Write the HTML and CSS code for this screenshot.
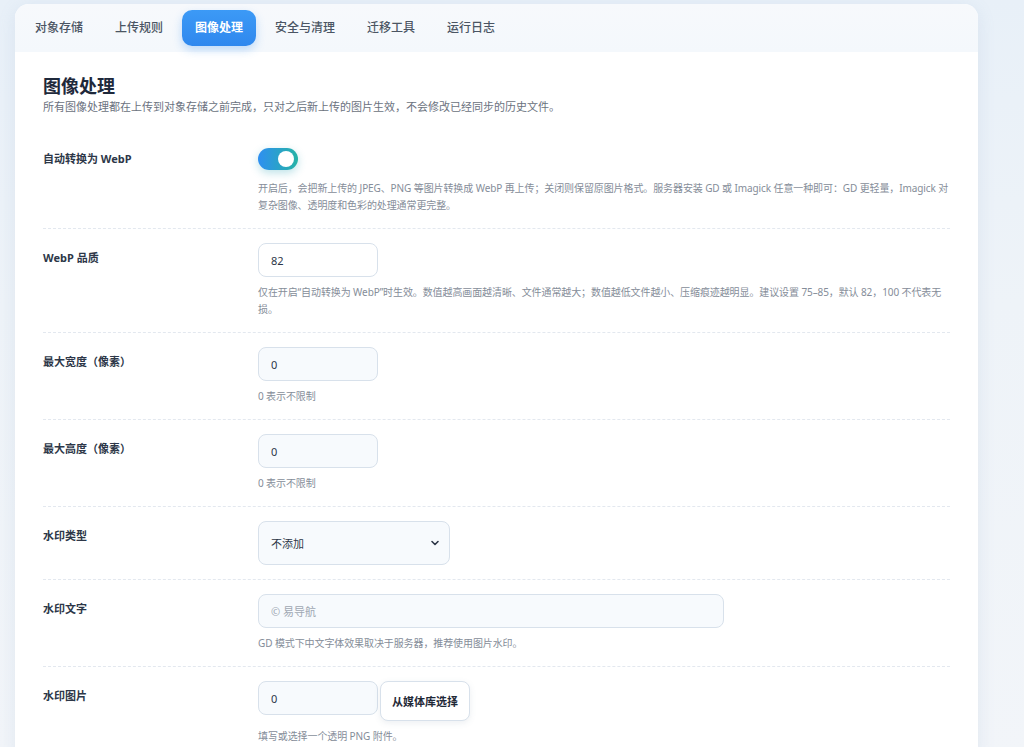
FILE: index.html
```html
<!DOCTYPE html>
<html lang="zh-CN">
<head>
    <meta charset="UTF-8">
    <meta name="viewport" content="width=device-width, initial-scale=1.0">
    <title>图像处理</title>
    <link rel="stylesheet" href="styles.css">
</head>
<body>
    <div class="panel">
        <nav class="tabs">
            <a class="tab">对象存储</a>
            <a class="tab">上传规则</a>
            <a class="tab active">图像处理</a>
            <a class="tab">安全与清理</a>
            <a class="tab">迁移工具</a>
            <a class="tab">运行日志</a>
        </nav>

        <section class="content">
            <h1>图像处理</h1>
            <p class="lead">所有图像处理都在上传到对象存储之前完成，只对之后新上传的图片生效，不会修改已经同步的历史文件。</p>

            <div class="row">
                <label class="label">自动转换为 WebP</label>
                <div class="field">
                    <span class="switch on"><span class="knob"></span></span>
                    <p class="hint">开启后，会把新上传的 JPEG、PNG 等图片转换成 WebP 再上传；关闭则保留原图片格式。服务器安装 GD 或 Imagick 任意一种即可：GD 更轻量，Imagick 对复杂图像、透明度和色彩的处理通常更完整。</p>
                </div>
            </div>

            <div class="row">
                <label class="label">WebP 品质</label>
                <div class="field">
                    <input class="input small white" type="text" value="82">
                    <p class="hint">仅在开启“自动转换为 WebP”时生效。数值越高画面越清晰、文件通常越大；数值越低文件越小、压缩痕迹越明显。建议设置 75–85，默认 82，100 不代表无损。</p>
                </div>
            </div>

            <div class="row">
                <label class="label">最大宽度（像素）</label>
                <div class="field">
                    <input class="input small" type="text" value="0">
                    <p class="hint">0 表示不限制</p>
                </div>
            </div>

            <div class="row">
                <label class="label">最大高度（像素）</label>
                <div class="field">
                    <input class="input small" type="text" value="0">
                    <p class="hint">0 表示不限制</p>
                </div>
            </div>

            <div class="row">
                <label class="label">水印类型</label>
                <div class="field">
                    <div class="select">
                        <span>不添加</span>
                        <svg width="10" height="10" viewBox="0 0 10 10"><path d="M2 3.5 L5 6.5 L8 3.5" fill="none" stroke="#2d3748" stroke-width="1.6" stroke-linecap="round" stroke-linejoin="round"/></svg>
                    </div>
                </div>
            </div>

            <div class="row">
                <label class="label">水印文字</label>
                <div class="field">
                    <input class="input wide" type="text" placeholder="© 易导航">
                    <p class="hint">GD 模式下中文字体效果取决于服务器，推荐使用图片水印。</p>
                </div>
            </div>

            <div class="row last">
                <label class="label">水印图片</label>
                <div class="field">
                    <div class="pick">
                        <input class="input small" type="text" value="0">
                        <button class="btn">从媒体库选择</button>
                    </div>
                    <p class="hint">填写或选择一个透明 PNG 附件。</p>
                </div>
            </div>
        </section>
    </div>
</body>
</html>
```

FILE: styles.css
```css
* {
    box-sizing: border-box;
}
body {
    margin: 0;
    padding: 4px 46px 0 15px;
    font-family: "Noto Sans", "Noto Sans CJK SC", sans-serif;
    background: linear-gradient(180deg, #e8f0f8 0%, #eef3f8 40%, #f2f5f9 100%);
    min-height: 747px;
    overflow: hidden;
}
.panel {
    background: #fff;
    border-radius: 14px 14px 0 0;
    box-shadow: 0 4px 18px rgba(120, 150, 190, 0.14);
    overflow: hidden;
}
.tabs {
    display: flex;
    gap: 6px;
    padding: 6px 7px;
    background: linear-gradient(180deg, #f7f9fc 0%, #f4f8fc 100%);
}
.tab {
    padding: 0 13px;
    height: 36px;
    line-height: 36px;
    font-size: 12px;
    font-weight: 500;
    color: #4b5563;
    border-radius: 10px;
    cursor: pointer;
}
.tab.active {
    color: #fff;
    font-weight: 700;
    background: linear-gradient(180deg, #3c9af6 0%, #2f88ee 100%);
    box-shadow: 0 4px 10px rgba(47, 136, 238, 0.28);
}
.content {
    padding: 21px 28px 0 28px;
}
h1 {
    margin: 0;
    font-size: 18px;
    line-height: 26px;
    font-weight: 700;
    color: #1e293b;
}
.lead {
    margin: 0 0 15px;
    font-size: 11px;
    line-height: 16px;
    color: #6b7280;
}
.row {
    display: grid;
    grid-template-columns: 215px 1fr;
    padding: 14px 0 14px;
    border-bottom: 1px dashed #e3e8ef;
}
.row.last {
    border-bottom: none;
}
.label {
    padding-top: 8px;
    font-size: 11px;
    line-height: 14px;
    font-weight: 700;
    color: #2d3748;
}
.field {
    display: flex;
    flex-direction: column;
    align-items: flex-start;
}
.hint {
    margin: 7px 0 0;
    font-size: 10px;
    line-height: 17px;
    letter-spacing: -0.1px;
    color: #858d99;
}
.switch {
    display: inline-block;
    width: 40px;
    height: 22px;
    margin: 4px 0 3px;
    border-radius: 11px;
    background: linear-gradient(90deg, #2f8ff1 0%, #25b3a6 100%);
    box-shadow: 0 3px 8px rgba(37, 160, 180, 0.3);
    position: relative;
}
.switch .knob {
    position: absolute;
    top: 3px;
    right: 4px;
    width: 16px;
    height: 16px;
    border-radius: 50%;
    background: #fff;
}
.input {
    height: 34px;
    padding: 0 12px;
    border: 1px solid #d8e1eb;
    border-radius: 8px;
    background: #f7fafd;
    font-family: inherit;
    font-size: 11px;
    color: #2d3748;
    outline: none;
}
.input.white {
    background: #fff;
}
.input.small {
    width: 120px;
}
.input.wide {
    width: 466px;
}
.input::placeholder {
    color: #a0a8b3;
}
.select {
    display: flex;
    align-items: center;
    justify-content: space-between;
    width: 192px;
    height: 44px;
    padding: 0 9px 0 12px;
    border: 1px solid #d8e1eb;
    border-radius: 8px;
    background: #f7fafd;
    font-size: 11px;
    color: #2d3748;
}
.pick {
    display: flex;
    align-items: flex-start;
    gap: 2px;
}
.btn {
    height: 40px;
    padding: 0 11px;
    border: 1px solid #d8e1eb;
    border-radius: 8px;
    background: #fff;
    font-family: inherit;
    font-size: 11px;
    font-weight: 700;
    color: #1f2937;
    box-shadow: 0 2px 6px rgba(100, 120, 150, 0.12);
    cursor: pointer;
}
```
